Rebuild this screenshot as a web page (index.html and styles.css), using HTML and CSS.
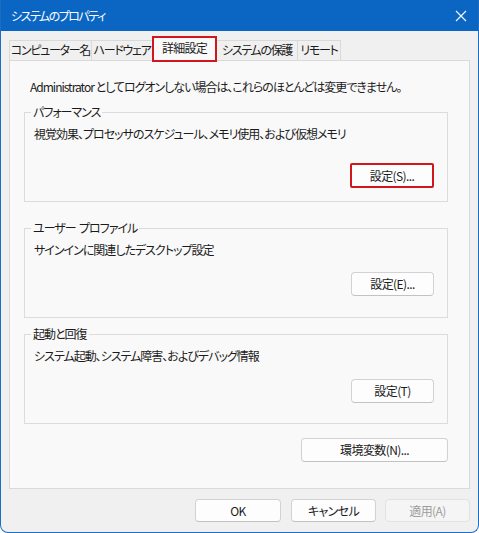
FILE: index.html
```html
<!DOCTYPE html>
<html lang="ja">
<head>
<meta charset="utf-8">
<link rel="stylesheet" href="styles.css">
</head>
<body>
<div class="window">
  <div class="titlebar">
    <span class="title">システムのプロパティ</span>
    <span class="close">
      <svg width="12" height="12" viewBox="0 0 12 12"><path d="M1 1 L11 11 M11 1 L1 11" stroke="#fff" stroke-width="1.1" fill="none"/></svg>
    </span>
  </div>
  <div class="tabs">
    <div class="tab t1">コンピューター名</div>
    <div class="tab t2">ハードウェア</div>
    <div class="tab t3 selected">詳細設定</div>
    <div class="tab t4">システムの保護</div>
    <div class="tab t5">リモート</div>
  </div>
  <div class="panel">
    <p class="note">Administrator としてログオンしない場合は、これらのほとんどは変更できません。</p>
    <fieldset class="group g1">
      <legend>パフォーマンス</legend>
      <p class="desc">視覚効果、プロセッサのスケジュール、メモリ使用、および仮想メモリ</p>
      <div class="btnrow"><button class="btn hl">設定(S)...</button></div>
    </fieldset>
    <fieldset class="group g2">
      <legend>ユーザー&nbsp; プロファイル</legend>
      <p class="desc">サインインに関連したデスクトップ設定</p>
      <div class="btnrow"><button class="btn">設定(E)...</button></div>
    </fieldset>
    <fieldset class="group g3">
      <legend>起動と回復</legend>
      <p class="desc">システム起動、システム障害、およびデバッグ情報</p>
      <div class="btnrow"><button class="btn">設定(T)</button></div>
    </fieldset>
    <div class="envrow"><button class="btn env">環境変数(N)...</button></div>
  </div>
  <div class="footer">
    <button class="btn foot">OK</button>
    <button class="btn foot">キャンセル</button>
    <button class="btn foot disabled">適用(A)</button>
  </div>
</div>
</body>
</html>
```
FILE: styles.css
```css
* { box-sizing: border-box; }
html, body { margin: 0; padding: 0; background: #ffffff; }
body {
  font-family: "Noto Sans CJK JP", "Noto Sans", sans-serif;
  font-size: 12px;
  letter-spacing: -1px;
  color: #1b1b1b;
  font-feature-settings: "palt";
}
.window {
  width: 479px;
  height: 533px;
  border: 1px solid #1c6dc4;
  border-top: none;
  border-radius: 0 0 8px 8px;
  background: #f0f0f0;
  overflow: hidden;
  display: flex;
  flex-direction: column;
}
.titlebar {
  height: 31px;
  background: #0b66c3;
  display: flex;
  align-items: center;
  justify-content: space-between;
  padding: 0 10px 0 10px;
  color: #fff;
  flex-shrink: 0;
}
.title { font-size: 12px; line-height: 16px; letter-spacing: -1.5px; }
.close { display: flex; width: 12px; height: 12px; margin-right: 1px; }
.tabs {
  display: flex;
  align-items: flex-end;
  height: 29px;
  padding-left: 8px;
  flex-shrink: 0;
}
.tab {
  height: 20px;
  border: 1px solid #d9d9d9;
  border-bottom: none;
  border-right: none;
  background: #f0f0f0;
  text-align: center;
  line-height: 18px;
  white-space: nowrap;
  letter-spacing: -1.3px;
}
.t1 { width: 82px; }
.t2 { width: 61px; }
.t3 { width: 65px; }
.t4 { width: 80px; border-left: none; }
.t5 { width: 44px; border-right: 1px solid #d9d9d9; }
.tab.selected {
  position: relative;
  z-index: 1;
  height: 26px;
  margin-bottom: -2px;
  border: 2px solid #d0171d;
  background: #f9f9f9;
  line-height: 20px;
  letter-spacing: -0.8px;
}
.panel {
  margin: 0 8px;
  height: 429px;
  border: 1px solid #dadada;
  background: #f9f9f9;
  padding: 18px 21px 0 14px;
  flex-shrink: 0;
}
.note { margin: 0 0 0 6px; line-height: 16px; }
.group {
  margin: 9px 0 0 0;
  padding: 6px 13px 0 9px;
  border: 1px solid #dcdcdc;
  min-inline-size: 0;
}
.group legend {
  padding: 0 2px;
  margin-left: -3px;
  line-height: 16px;
}
.desc { margin: 0; line-height: 16px; }
.btnrow { display: flex; justify-content: flex-end; }
.g1 { height: 98px; }
.g1 .btnrow { margin-top: 21px; }
.g2 { margin-top: 18px; height: 98px; }
.g2 .btnrow { margin-top: 14px; }
.g3 { margin-top: 8px; height: 98px; }
.g3 .btnrow { margin-top: 15px; }
.btn {
  font-family: inherit;
  font-size: 12px;
  letter-spacing: -0.6px;
  font-feature-settings: "palt";
  color: #1b1b1b;
  background: #fdfdfd;
  border: 1px solid #d2d2d2;
  border-bottom-color: #c2c2c2;
  border-radius: 4px;
  height: 24px;
  width: 83px;
  padding: 0;
  line-height: 20px;
}
.btn.hl {
  width: 84px;
  height: 25px;
  border: 2px solid #d0171d;
  border-radius: 2px;
}
.envrow { display: flex; justify-content: flex-end; margin-top: 14px; }
.btn.env { width: 147px; }
.footer {
  display: flex;
  justify-content: flex-end;
  gap: 9px;
  padding: 10px 8px 0 0;
}
.btn.foot { width: 85px; height: 23px; }
.btn.foot:first-child { width: 86px; margin-right: 1px; }
.btn.disabled {
  color: #9d9d9d;
  background: #f5f5f5;
  border-color: #e2e2e2;
}
```
